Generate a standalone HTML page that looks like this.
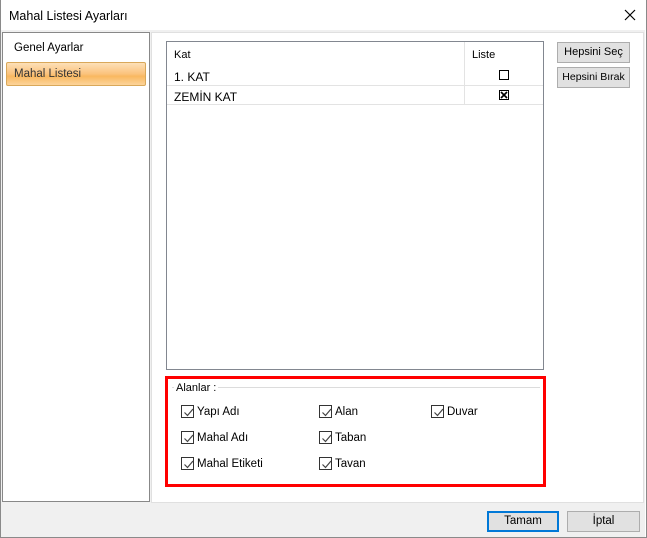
<!DOCTYPE html>
<html><head><meta charset="utf-8"><style>
*{margin:0;padding:0;box-sizing:border-box}
body{width:647px;height:538px;background:#fff;font-family:"Liberation Sans",sans-serif;font-size:11px;color:#000;position:relative;overflow:hidden}
.a{position:absolute}
.btn{position:absolute;background:#e1e1e1;border:1px solid #adadad;text-align:center;line-height:19px;font-size:11px;white-space:nowrap}
.cb{position:absolute;width:13px;height:13px;border:1px solid #333;background:#fff}
.cb svg{position:absolute;left:1px;top:1px}
.lbl{position:absolute;font-size:11.5px}
</style></head><body>
<div class="a" style="left:0;top:0;width:647px;height:538px;border:1px solid #8a8a8a;border-top:none"></div>
<div class="a" style="left:9px;top:9px;font-size:12.5px">Mahal Listesi Ayarları</div>
<svg class="a" style="left:624px;top:9px" width="12" height="12"><path d="M1 1L11 11M11 1L1 11" stroke="#000" stroke-width="1.2"/></svg>
<div class="a" style="left:1px;top:30px;width:644px;height:507px;background:#f0f0f0"></div>
<div class="a" style="left:2px;top:32px;width:148px;height:470px;background:#fff;border:1px solid #888"></div>
<div class="a" style="left:14px;top:42px;font-size:11.5px">Genel Ayarlar</div>
<div class="a" style="left:6px;top:62px;width:140px;height:24px;border:1px solid #d9a85a;border-radius:2px;background:linear-gradient(#fde0b8,#fbc27c 50%,#f9b860 60%,#fcd49a)"></div>
<div class="a" style="left:14px;top:68px;color:#333;font-size:11.5px">Mahal Listesi</div>
<div class="a" style="left:151px;top:32px;width:493px;height:471px;background:#fff;border:1px solid #e0e0e0"></div>
<div class="a" style="left:166px;top:41px;width:378px;height:329px;border:1px solid #828790;background:#fff"></div>
<div class="a" style="left:174px;top:49px">Kat</div>
<div class="a" style="left:472px;top:49px">Liste</div>
<div class="a" style="left:464px;top:42px;width:1px;height:62px;background:#e3e3e3"></div>
<div class="a" style="left:167px;top:85px;width:376px;height:1px;background:#e3e3e3"></div>
<div class="a" style="left:167px;top:104px;width:376px;height:1px;background:#e3e3e3"></div>
<div class="a" style="left:174px;top:70px;font-size:12px">1. KAT</div>
<div class="a" style="left:174px;top:90px;font-size:12px">ZEMİN KAT</div>
<div class="a" style="left:499px;top:70px;width:10px;height:10px;border:1px solid #000"></div>
<div class="a" style="left:499px;top:90px;width:10px;height:10px;border:1px solid #000"></div>
<svg class="a" style="left:499px;top:90px" width="10" height="10"><path d="M2 2L8 8M8 2L2 8" stroke="#000" stroke-width="1.6"/></svg>
<div class="btn" style="left:557px;top:42px;width:73px;height:21px">Hepsini Seç</div>
<div class="btn" style="left:557px;top:67px;width:73px;height:21px;font-size:10.5px">Hepsini Bırak</div>
<div class="a" style="left:165px;top:376px;width:381px;height:111px;border:3px solid #f00"></div>
<div class="a" style="left:172px;top:387px;width:368px;height:1px;background:#dcdcdc"></div>
<div class="a" style="left:174px;top:382px;background:#fff;padding:0 2px">Alanlar :</div>
<div class="cb" style="left:181px;top:405px"><svg width="11" height="11"><path d="M1.5 5.5L4.5 8.5L10 2" stroke="#444" stroke-width="1.2" fill="none"/></svg></div>
<div class="lbl" style="left:197px;top:406px">Yapı Adı</div>
<div class="cb" style="left:319px;top:405px"><svg width="11" height="11"><path d="M1.5 5.5L4.5 8.5L10 2" stroke="#444" stroke-width="1.2" fill="none"/></svg></div>
<div class="lbl" style="left:335px;top:406px">Alan</div>
<div class="cb" style="left:431px;top:405px"><svg width="11" height="11"><path d="M1.5 5.5L4.5 8.5L10 2" stroke="#444" stroke-width="1.2" fill="none"/></svg></div>
<div class="lbl" style="left:447px;top:406px">Duvar</div>
<div class="cb" style="left:181px;top:431px"><svg width="11" height="11"><path d="M1.5 5.5L4.5 8.5L10 2" stroke="#444" stroke-width="1.2" fill="none"/></svg></div>
<div class="lbl" style="left:197px;top:432px">Mahal Adı</div>
<div class="cb" style="left:319px;top:431px"><svg width="11" height="11"><path d="M1.5 5.5L4.5 8.5L10 2" stroke="#444" stroke-width="1.2" fill="none"/></svg></div>
<div class="lbl" style="left:335px;top:432px">Taban</div>
<div class="cb" style="left:181px;top:457px"><svg width="11" height="11"><path d="M1.5 5.5L4.5 8.5L10 2" stroke="#444" stroke-width="1.2" fill="none"/></svg></div>
<div class="lbl" style="left:197px;top:458px">Mahal Etiketi</div>
<div class="cb" style="left:319px;top:457px"><svg width="11" height="11"><path d="M1.5 5.5L4.5 8.5L10 2" stroke="#444" stroke-width="1.2" fill="none"/></svg></div>
<div class="lbl" style="left:335px;top:458px">Tavan</div>
<div class="btn" style="left:487px;top:511px;width:72px;height:21px;border:2px solid #0078d7;line-height:17px;font-size:11.5px">Tamam</div>
<div class="btn" style="left:567px;top:511px;width:73px;height:21px;font-size:11.5px">İptal</div>
</body></html>
